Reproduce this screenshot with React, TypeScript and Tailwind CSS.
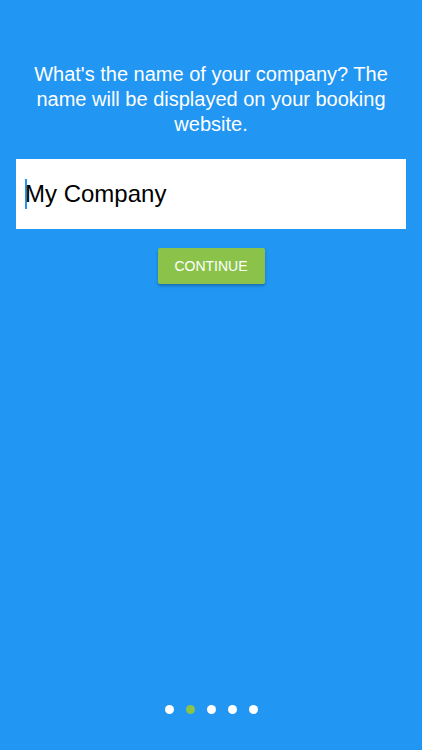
export default function App() {
  const dots = [false, true, false, false, false]
  return (
    <div className="flex h-[750px] w-[422px] flex-col bg-[#2196f3] font-['Liberation_Sans',Arial,sans-serif]">
      <p className="mx-auto mt-[62px] w-[370px] text-center text-[20px] leading-[25px] text-white">
        What's the name of your company? The name will be displayed on your booking website.
      </p>
      <div className="mx-4 mt-[22px] flex h-[70px] items-center bg-white pl-[9px]">
        <span className="h-[30px] w-[2px] bg-[#2196f3]" />
        <span className="-ml-[2px] text-[24px] text-black">My Company</span>
      </div>
      <div className="mt-[19px] flex justify-center">
        <button className="h-[36px] w-[107px] rounded-[2px] bg-[#8bc34a] text-[14px] text-white shadow-[0_2px_3px_rgba(0,0,0,0.25)]">
          CONTINUE
        </button>
      </div>
      <div className="mt-auto mb-[36px] flex justify-center gap-[12px]">
        {dots.map((on, i) => (
          <span
            key={i}
            className={on ? "h-[9px] w-[9px] rounded-full bg-[#8bc34a]" : "h-[9px] w-[9px] rounded-full bg-white"}
          />
        ))}
      </div>
    </div>
  )
}
